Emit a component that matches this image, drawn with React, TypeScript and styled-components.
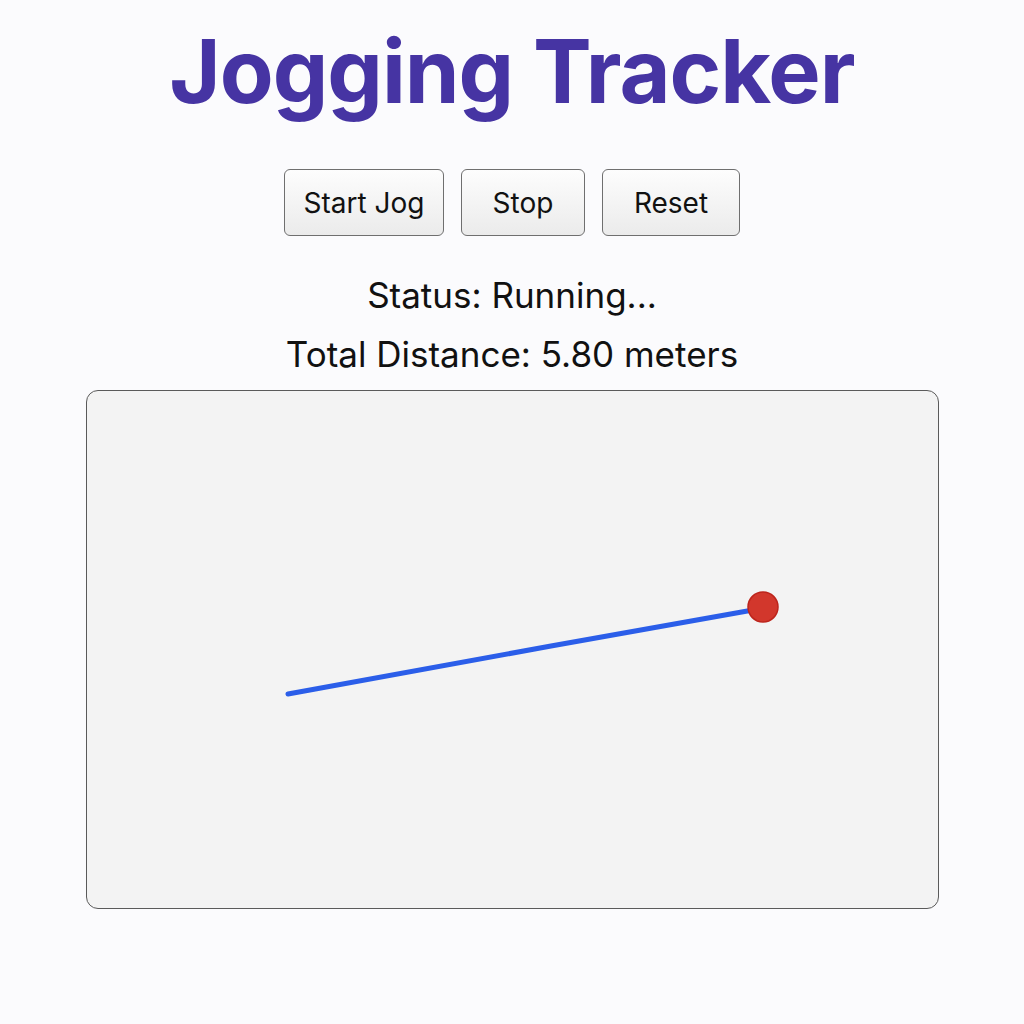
import React from "react";
import styled, { createGlobalStyle } from "styled-components";

const Global = createGlobalStyle`
  html, body { margin: 0; padding: 0; background: #fbfbfd; }
  body { font-family: Inter, "Liberation Sans", Arial, sans-serif; color: #111; }
`;

const Page = styled.div`
  display: flex;
  flex-direction: column;
  align-items: center;
  padding-top: 19px;
`;

const Title = styled.h1`
  margin: 0;
  font-family: Inter, "Liberation Sans", sans-serif;
  font-weight: 700;
  font-size: 88px;
  line-height: 104px;
  letter-spacing: -1px;
  color: #4634a3;
`;

const Toolbar = styled.div`
  display: flex;
  gap: 17px;
  margin-top: 46px;
`;

const Button = styled.button<{ $w: number }>`
  width: ${(p) => p.$w}px;
  height: 67px;
  border: 1px solid #6f6f6f;
  border-radius: 6px;
  background: linear-gradient(#fdfdfd, #ebebeb);
  font-family: Inter, "Liberation Sans", sans-serif;
  font-size: 28px;
  color: #111;
  padding: 0;
  cursor: pointer;
`;

const Info = styled.div<{ $mt: number }>`
  margin-top: ${(p) => p.$mt}px;
  font-family: Inter, "Liberation Sans", sans-serif;
  font-size: 35px;
  line-height: 42px;
  color: #111;
`;

const Canvas = styled.div`
  margin-top: 15px;
  width: 851px;
  height: 517px;
  border: 1px solid #5a5a5a;
  border-radius: 12px;
  background: #f3f3f3;
  overflow: hidden;
`;

const Track = styled.svg`
  display: block;
  width: 100%;
  height: 100%;
`;

export default function App() {
  // canvas origin at (86, 390)
  const ox = 86;
  const oy = 390;
  return (
    <>
      <Global />
      <Page>
        <Title>Jogging Tracker</Title>
        <Toolbar>
          <Button $w={160}>Start Jog</Button>
          <Button $w={124}>Stop</Button>
          <Button $w={138}>Reset</Button>
        </Toolbar>
        <Info $mt={38}>Status: Running...</Info>
        <Info $mt={17}>Total Distance: 5.80 meters</Info>
        <Canvas>
          <Track viewBox="0 0 851 517">
            <polyline
              points={`${287 - ox},${693 - oy} ${550 - ox},${645 - oy} ${752 - ox},${609 - oy}`}
              fill="none"
              stroke="#2b5ee9"
              strokeWidth={5}
              strokeLinecap="round"
              strokeLinejoin="round"
            />
            <circle cx={762 - ox} cy={606 - oy} r={15} fill="#d2372c" stroke="#bd241b" strokeWidth={1.5} />
          </Track>
        </Canvas>
      </Page>
    </>
  );
}
